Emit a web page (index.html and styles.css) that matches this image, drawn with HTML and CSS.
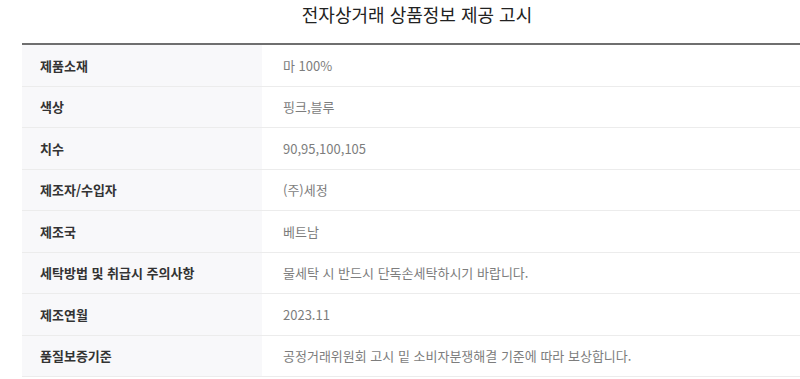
FILE: index.html
```html
<!DOCTYPE html>
<html lang="ko">
<head>
<meta charset="utf-8">
<link rel="stylesheet" href="styles.css">
</head>
<body>
<div class="wrap">
  <h2 class="title">전자상거래 상품정보 제공 고시</h2>
  <table class="info">
    <tr><th>제품소재</th><td>마 100%</td></tr>
    <tr><th>색상</th><td>핑크,블루</td></tr>
    <tr><th>치수</th><td>90,95,100,105</td></tr>
    <tr><th>제조자/수입자</th><td>(주)세정</td></tr>
    <tr><th>제조국</th><td>베트남</td></tr>
    <tr><th>세탁방법 및 취급시 주의사항</th><td>물세탁 시 반드시 단독손세탁하시기 바랍니다.</td></tr>
    <tr><th>제조연월</th><td>2023.11</td></tr>
    <tr><th>품질보증기준</th><td>공정거래위원회 고시 밑 소비자분쟁해결 기준에 따라 보상합니다.</td></tr>
  </table>
</div>
</body>
</html>
```

FILE: styles.css
```css
html, body {
  margin: 0;
  padding: 0;
  background: #fff;
  overflow: hidden;
}
body {
  font-family: "Noto Sans CJK KR", "Noto Sans", sans-serif;
  width: 800px;
  height: 379px;
}
.wrap {
  width: 790px;
  margin-left: 22px;
}
.title {
  margin: 0;
  padding-top: 2px;
  height: 43px;
  box-sizing: border-box;
  font-size: 18px;
  font-weight: 400;
  line-height: 25px;
  color: #222;
  text-align: center;
}
.info {
  width: 790px;
  border-collapse: collapse;
  border-top: 2px solid #6f6f6f;
}
.info th, .info td {
  height: 40.5px;
  padding: 0;
  border-bottom: 1px solid #ececec;
  font-size: 13px;
  text-align: left;
  vertical-align: middle;
}
.info th {
  width: 240px;
  padding-left: 18px;
  box-sizing: border-box;
  background: #f8f8fa;
  color: #333;
  font-weight: 700;
}
.info td {
  padding-left: 21px;
  color: #7d7d7d;
  font-weight: 400;
}
```
